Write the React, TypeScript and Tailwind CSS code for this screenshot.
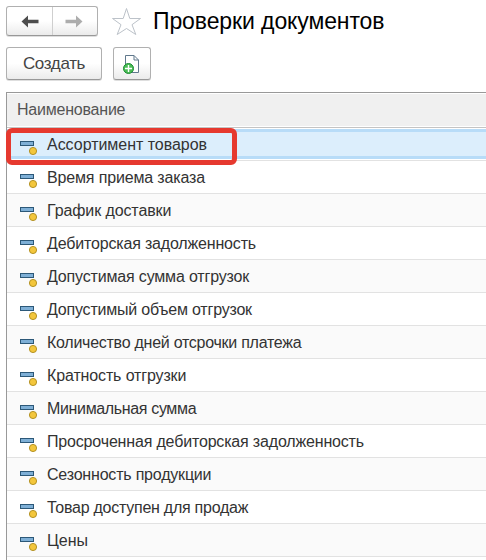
import React from "react";

const rows = [
  { name: "Ассортимент товаров", tracking: "tracking-[-0.03px]" },
  { name: "Время приема заказа", tracking: "tracking-[-0.15px]" },
  { name: "График доставки", tracking: "tracking-[-0.1px]" },
  { name: "Дебиторская задолженность", tracking: "tracking-[-0.17px]" },
  { name: "Допустимая сумма отгрузок", tracking: "tracking-[-0.17px]" },
  { name: "Допустимый объем отгрузок", tracking: "tracking-[-0.2px]" },
  { name: "Количество дней отсрочки платежа", tracking: "tracking-[-0.26px]" },
  { name: "Кратность отгрузки", tracking: "tracking-[-0.13px]" },
  { name: "Минимальная сумма", tracking: "tracking-[-0.35px]" },
  { name: "Просроченная дебиторская задолженность", tracking: "tracking-[-0.17px]" },
  { name: "Сезонность продукции", tracking: "tracking-[-0.2px]" },
  { name: "Товар доступен для продаж", tracking: "tracking-[-0.25px]" },
  { name: "Цены", tracking: "tracking-normal" },
];

const button =
  "flex items-center justify-center rounded-[3px] border border-[#b0b0b0] border-b-[#989898] bg-linear-to-b from-white from-50% to-[#ebebeb] shadow-[0_1px_0_#dedede]";

function Arrow({ flip = false }: { flip?: boolean }) {
  return (
    <svg width="18" height="13" viewBox="0 0 18 13" className={flip ? "-scale-x-100" : ""}>
      <path d="M0.5 6.5L7 0.5V4.7H17.5V8.3H7V12.5Z" fill={flip ? "#adadad" : "#4d4d4d"} />
    </svg>
  );
}

function ItemIcon() {
  return (
    <svg width="18" height="15" viewBox="0 0 18 15" className="shrink-0">
      <rect x="0.5" y="0.5" width="13" height="4" fill="#7eafd6" stroke="#2c5878" />
      <circle cx="13" cy="10" r="3.6" fill="#f3c63c" stroke="#ad8a18" strokeWidth="0.9" />
    </svg>
  );
}

export default function App() {
  return (
    <div className="h-[560px] w-[486px] overflow-hidden bg-white pl-1.5 pt-1.5 font-['Liberation_Sans',Arial,sans-serif] text-[16px] text-[#333]">
      <header className="flex h-[30px] items-center">
        <div className={`${button} h-[30px] w-[92px]`}>
          <div className="flex h-full w-[46px] items-center justify-center border-r border-[#cfcfcf]">
            <Arrow />
          </div>
          <div className="flex flex-1 items-center justify-center pr-0.5">
            <Arrow flip />
          </div>
        </div>
        <svg width="30" height="29" viewBox="0 0 30 29" className="ml-[13px]">
          <path
            d="M15.5 1.5L18.8 11.5H29.5L21 17.7L24.8 27.5L15.5 21.5L6.2 27.5L10 17.7L1.5 11.5H12.2Z"
            fill="white"
            stroke="#bcc2c9"
          />
        </svg>
        <h1 className="ml-3 whitespace-nowrap text-[23px] leading-[30px] tracking-[-0.1px] text-black">
          Проверки документов
        </h1>
      </header>
      <div className="mt-[11px] flex h-[33px] gap-[11px]">
        <button className={`${button} w-24 text-[17px] tracking-[-0.35px] text-[#444]`}>Создать</button>
        <button className={`${button} w-[38px]`}>
          <svg width="18" height="20" viewBox="0 0 18 20">
            <path d="M2.5 18.5V1.5H11L15.5 6V18.5Z" fill="white" stroke="#60788c" />
            <path d="M11 1.5V6H15.5" fill="none" stroke="#60788c" />
            <circle cx="5.5" cy="14.5" r="5" fill="#4abd55" stroke="#1c8a32" />
            <path d="M5.5 11V18M2 14.5H9" stroke="white" strokeWidth="1.4" />
          </svg>
        </button>
      </div>
      <main className="relative mt-3 h-[468px] border-l border-t border-[#999]">
        <div className="h-[35px] border-b border-[#c4c4c4] py-px">
          <div className="h-8 bg-[#f0f0f0] pl-2.5 leading-8 tracking-[-0.22px] text-[#555]">
            Наименование
          </div>
        </div>
        {rows.map((row, i) => (
          <div
            key={row.name}
            className={`h-[33px] border-b border-[#e2e2e2] py-px ${i > 0 && i % 2 === 0 ? "bg-[#fafafa]" : "bg-white"}`}
          >
            <div
              className={`flex h-[30px] border-y-[3px] pl-[13px] ${i === 0 ? "border-[#b8dcf8] bg-[#dceefc]" : "border-transparent"}`}
            >
              <div className="pt-[9px]">
                <ItemIcon />
              </div>
              <span className={`ml-[9px] whitespace-nowrap leading-[25px] ${row.tracking}`}>
                {row.name}
              </span>
            </div>
          </div>
        ))}
        <div className="absolute -left-px top-[35px] h-[37px] w-[231px] rounded-[6px] border-[5px] border-[#e6392f]" />
      </main>
    </div>
  );
}
